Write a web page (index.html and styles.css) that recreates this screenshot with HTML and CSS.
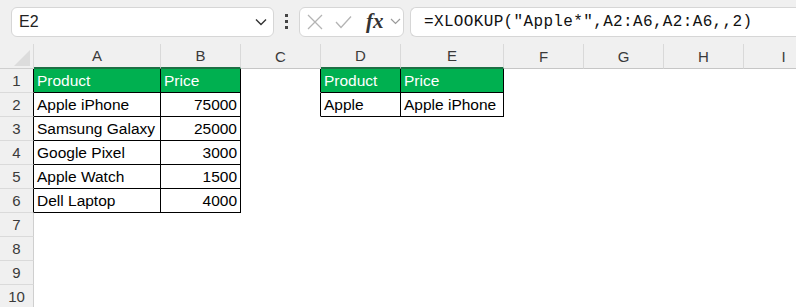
FILE: index.html
```html
<!DOCTYPE html>
<html lang="en">
<head>
  <meta charset="UTF-8">
  <title>XLOOKUP wildcard</title>
  <link rel="stylesheet" href="styles.css">
</head>
<body>
  <div class="topbar">
    <div class="namebox">
      <span>E2</span>
      <svg class="chev" width="12" height="8" viewBox="0 0 12 8"><path d="M1 1.5 L6 6.5 L11 1.5" fill="none" stroke="#333" stroke-width="1.4"/></svg>
    </div>
    <div class="grip"><i></i><i></i><i></i></div>
    <div class="fxgroup">
      <svg class="cancel" width="16" height="16" viewBox="0 0 16 16"><path d="M1 1 L15 15 M15 1 L1 15" stroke="#b4b4b4" stroke-width="1.3"/></svg>
      <svg class="enter" width="17" height="14" viewBox="0 0 17 14"><path d="M1 7 L6 12.5 L16 1.5" fill="none" stroke="#b4b4b4" stroke-width="1.3"/></svg>
      <span class="fx">fx</span>
      <svg width="11" height="7" viewBox="0 0 11 7"><path d="M1 1 L5.5 5.5 L10 1" fill="none" stroke="#9a9a9a" stroke-width="1.2"/></svg>
    </div>
    <div class="formula">=XLOOKUP("Apple*",A2:A6,A2:A6,,2)</div>
  </div>

  <div class="sheet">
    <div class="corner"><span class="tri"></span></div>
    <div class="col sel">A</div>
    <div class="col sel">B</div>
    <div class="col">C</div>
    <div class="col sel">D</div>
    <div class="col sel">E</div>
    <div class="col">F</div>
    <div class="col">G</div>
    <div class="col">H</div>
    <div class="col">I</div>

    <div class="row edge">1</div>
    <div class="cell t head">Product</div>
    <div class="cell t head">Price</div>
    <div class="cell edge"></div>
    <div class="cell t head">Product</div>
    <div class="cell t head">Price</div>
    <div class="cell"></div><div class="cell"></div><div class="cell"></div><div class="cell"></div>

    <div class="row edge">2</div>
    <div class="cell t">Apple iPhone</div>
    <div class="cell t num">75000</div>
    <div class="cell edge"></div>
    <div class="cell t">Apple</div>
    <div class="cell t">Apple iPhone</div>
    <div class="cell"></div><div class="cell"></div><div class="cell"></div><div class="cell"></div>

    <div class="row edge">3</div>
    <div class="cell t">Samsung Galaxy</div>
    <div class="cell t num">25000</div>
    <div class="cell"></div><div class="cell"></div><div class="cell"></div><div class="cell"></div><div class="cell"></div><div class="cell"></div><div class="cell"></div>

    <div class="row edge">4</div>
    <div class="cell t">Google Pixel</div>
    <div class="cell t num">3000</div>
    <div class="cell"></div><div class="cell"></div><div class="cell"></div><div class="cell"></div><div class="cell"></div><div class="cell"></div><div class="cell"></div>

    <div class="row edge">5</div>
    <div class="cell t">Apple Watch</div>
    <div class="cell t num">1500</div>
    <div class="cell"></div><div class="cell"></div><div class="cell"></div><div class="cell"></div><div class="cell"></div><div class="cell"></div><div class="cell"></div>

    <div class="row edge">6</div>
    <div class="cell t">Dell Laptop</div>
    <div class="cell t num">4000</div>
    <div class="cell"></div><div class="cell"></div><div class="cell"></div><div class="cell"></div><div class="cell"></div><div class="cell"></div><div class="cell"></div>

    <div class="row">7</div>
    <div class="cell"></div><div class="cell"></div><div class="cell"></div><div class="cell"></div><div class="cell"></div><div class="cell"></div><div class="cell"></div><div class="cell"></div><div class="cell"></div>
    <div class="row">8</div>
    <div class="cell"></div><div class="cell"></div><div class="cell"></div><div class="cell"></div><div class="cell"></div><div class="cell"></div><div class="cell"></div><div class="cell"></div><div class="cell"></div>
    <div class="row">9</div>
    <div class="cell"></div><div class="cell"></div><div class="cell"></div><div class="cell"></div><div class="cell"></div><div class="cell"></div><div class="cell"></div><div class="cell"></div><div class="cell"></div>
    <div class="row">10</div>
    <div class="cell"></div><div class="cell"></div><div class="cell"></div><div class="cell"></div><div class="cell"></div><div class="cell"></div><div class="cell"></div><div class="cell"></div><div class="cell"></div>
  </div>
</body>
</html>
```

FILE: styles.css
```css
body {
  margin: 0;
  width: 796px;
  height: 307px;
  overflow: hidden;
  background: #fff;
  font-family: "Liberation Sans", Arial, sans-serif;
}
.topbar {
  display: flex;
  align-items: center;
  height: 44px;
  box-sizing: border-box;
  padding: 0 0 1px 11px;
  background: #f0f0f0;
}
.namebox {
  display: flex;
  align-items: center;
  justify-content: space-between;
  box-sizing: border-box;
  width: 263px;
  height: 30px;
  padding: 0 6px 0 7px;
  background: #fff;
  border: 1px solid #d6d6d6;
  border-radius: 6px;
  font-size: 16px;
  color: #222;
}
.grip {
  display: flex;
  flex-direction: column;
  gap: 3px;
  margin: 0 11px 0 11px;
}
.grip i {
  display: block;
  width: 3px;
  height: 3px;
  background: #444;
}
.fxgroup {
  display: flex;
  align-items: center;
  box-sizing: border-box;
  width: 105px;
  height: 30px;
  padding: 0 0 0 7px;
  background: #fff;
  border: 1px solid #d6d6d6;
  border-radius: 6px;
}
.enter {
  margin-left: 12px;
}
.fx {
  font-family: "Liberation Serif", "Times New Roman", serif;
  font-style: italic;
  font-weight: bold;
  font-size: 21px;
  color: #333;
  margin: 0 6px 1px 14px;
}
.formula {
  flex: 1;
  box-sizing: border-box;
  height: 30px;
  margin-left: 6px;
  padding: 5px 0 0 13px;
  background: #fff;
  border: 1px solid #d6d6d6;
  border-right: none;
  border-radius: 6px 0 0 6px;
  font-family: "Liberation Mono", "Courier New", monospace;
  font-size: 16px;
  letter-spacing: 0.35px;
  color: #111;
  white-space: nowrap;
}
.sheet {
  display: grid;
  grid-template-columns: 34px 127px 80px 80px 80px 103px 80px 80px 80px 80px;
  grid-template-rows: 25px;
  grid-auto-rows: 24px;
  font-size: 15.5px;
}
.sheet > div {
  box-sizing: border-box;
  border-right: 1px solid transparent;
  border-bottom: 1px solid transparent;
}
.corner {
  position: relative;
  background: #f0f0f0;
  border-right-color: #d9d9d9 !important;
  border-bottom-color: #cfcfcf !important;
}
.tri {
  position: absolute;
  right: 3px;
  bottom: 2px;
  width: 0;
  height: 0;
  border-left: 16px solid transparent;
  border-bottom: 16px solid #dcdcdc;
}
.col {
  display: flex;
  align-items: center;
  justify-content: center;
  background: #f0f0f0;
  color: #3a3a3a;
  font-size: 15px;
  border-right-color: #d9d9d9 !important;
  border-bottom-color: #c6c6c6 !important;
}
.col.sel {
  border-bottom: 2px solid #1d7044 !important;
}
.row {
  display: flex;
  align-items: center;
  justify-content: center;
  background: #f0f0f0;
  color: #3a3a3a;
  font-size: 15px;
  border-right-color: #cfcfcf !important;
  border-bottom-color: #dadada !important;
}
.row.edge, .cell.edge {
  border-right-color: #000 !important;
}
.cell {
  display: flex;
  align-items: center;
  padding: 0 3px;
  color: #000;
  white-space: nowrap;
}
.cell.t {
  border-right-color: #000;
  border-bottom-color: #000;
}
.cell.head {
  background: #00b050;
  color: #fff;
}
.cell.num {
  justify-content: flex-end;
}
```
